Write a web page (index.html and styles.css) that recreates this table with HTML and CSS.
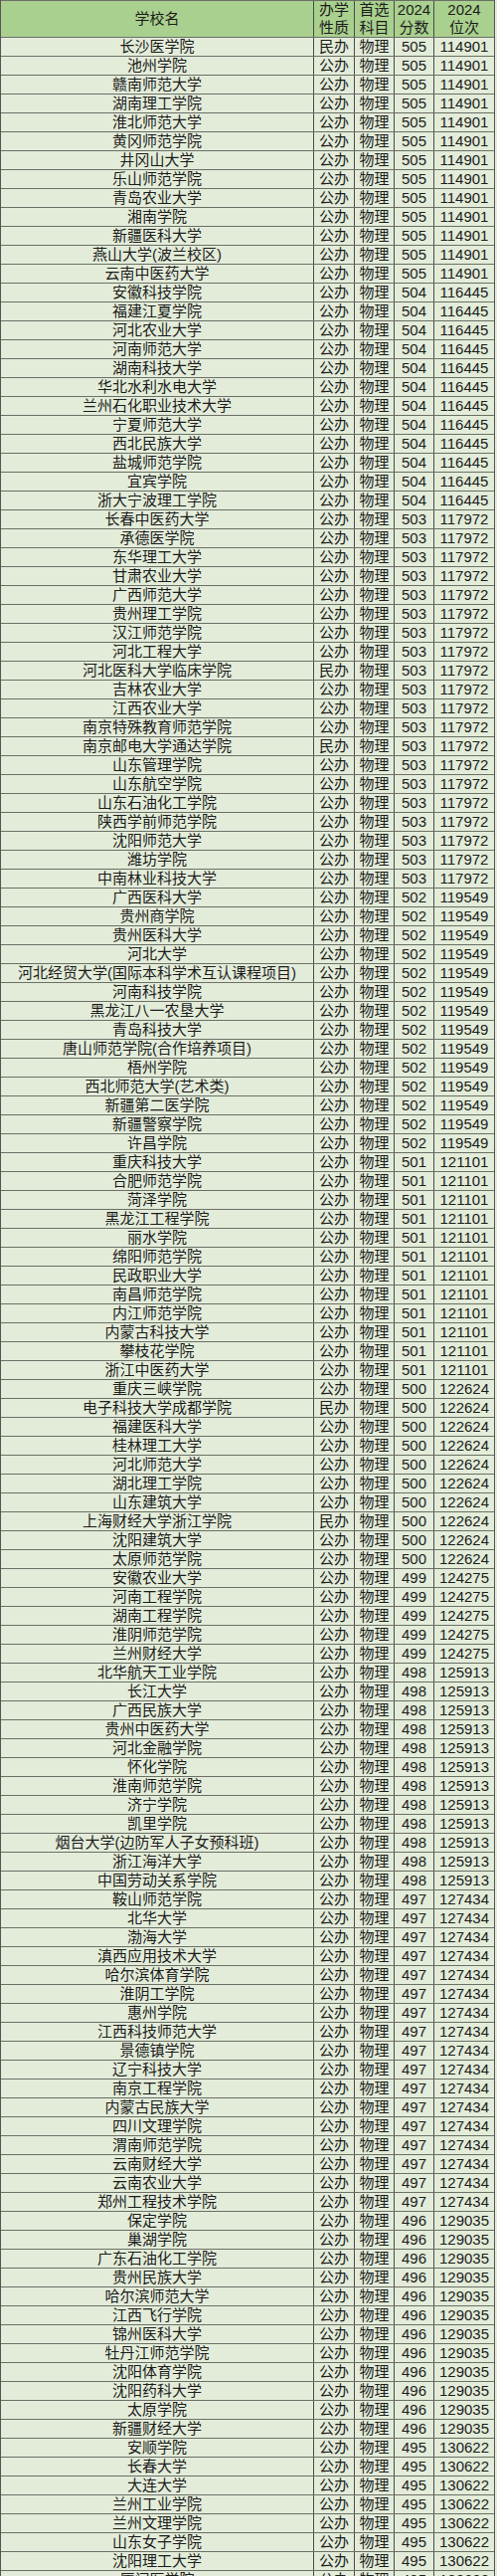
FILE: index.html
```html
<!DOCTYPE html>
<html lang="zh-CN">
<head>
<meta charset="utf-8">
<title>2024 物理类 分数位次</title>
<link rel="stylesheet" href="styles.css">
</head>
<body>
<div class="sheet">
<div class="row head"><span>学校名</span><span>办学<br>性质</span><span>首选<br>科目</span><span>2024<br>分数</span><span>2024<br>位次</span></div>
<div class="row"><span>长沙医学院</span><span>民办</span><span>物理</span><span>505</span><span>114901</span></div>
<div class="row"><span>池州学院</span><span>公办</span><span>物理</span><span>505</span><span>114901</span></div>
<div class="row"><span>赣南师范大学</span><span>公办</span><span>物理</span><span>505</span><span>114901</span></div>
<div class="row"><span>湖南理工学院</span><span>公办</span><span>物理</span><span>505</span><span>114901</span></div>
<div class="row"><span>淮北师范大学</span><span>公办</span><span>物理</span><span>505</span><span>114901</span></div>
<div class="row"><span>黄冈师范学院</span><span>公办</span><span>物理</span><span>505</span><span>114901</span></div>
<div class="row"><span>井冈山大学</span><span>公办</span><span>物理</span><span>505</span><span>114901</span></div>
<div class="row"><span>乐山师范学院</span><span>公办</span><span>物理</span><span>505</span><span>114901</span></div>
<div class="row"><span>青岛农业大学</span><span>公办</span><span>物理</span><span>505</span><span>114901</span></div>
<div class="row"><span>湘南学院</span><span>公办</span><span>物理</span><span>505</span><span>114901</span></div>
<div class="row"><span>新疆医科大学</span><span>公办</span><span>物理</span><span>505</span><span>114901</span></div>
<div class="row"><span>燕山大学(波兰校区)</span><span>公办</span><span>物理</span><span>505</span><span>114901</span></div>
<div class="row"><span>云南中医药大学</span><span>公办</span><span>物理</span><span>505</span><span>114901</span></div>
<div class="row"><span>安徽科技学院</span><span>公办</span><span>物理</span><span>504</span><span>116445</span></div>
<div class="row"><span>福建江夏学院</span><span>公办</span><span>物理</span><span>504</span><span>116445</span></div>
<div class="row"><span>河北农业大学</span><span>公办</span><span>物理</span><span>504</span><span>116445</span></div>
<div class="row"><span>河南师范大学</span><span>公办</span><span>物理</span><span>504</span><span>116445</span></div>
<div class="row"><span>湖南科技大学</span><span>公办</span><span>物理</span><span>504</span><span>116445</span></div>
<div class="row"><span>华北水利水电大学</span><span>公办</span><span>物理</span><span>504</span><span>116445</span></div>
<div class="row"><span>兰州石化职业技术大学</span><span>公办</span><span>物理</span><span>504</span><span>116445</span></div>
<div class="row"><span>宁夏师范大学</span><span>公办</span><span>物理</span><span>504</span><span>116445</span></div>
<div class="row"><span>西北民族大学</span><span>公办</span><span>物理</span><span>504</span><span>116445</span></div>
<div class="row"><span>盐城师范学院</span><span>公办</span><span>物理</span><span>504</span><span>116445</span></div>
<div class="row"><span>宜宾学院</span><span>公办</span><span>物理</span><span>504</span><span>116445</span></div>
<div class="row"><span>浙大宁波理工学院</span><span>公办</span><span>物理</span><span>504</span><span>116445</span></div>
<div class="row"><span>长春中医药大学</span><span>公办</span><span>物理</span><span>503</span><span>117972</span></div>
<div class="row"><span>承德医学院</span><span>公办</span><span>物理</span><span>503</span><span>117972</span></div>
<div class="row"><span>东华理工大学</span><span>公办</span><span>物理</span><span>503</span><span>117972</span></div>
<div class="row"><span>甘肃农业大学</span><span>公办</span><span>物理</span><span>503</span><span>117972</span></div>
<div class="row"><span>广西师范大学</span><span>公办</span><span>物理</span><span>503</span><span>117972</span></div>
<div class="row"><span>贵州理工学院</span><span>公办</span><span>物理</span><span>503</span><span>117972</span></div>
<div class="row"><span>汉江师范学院</span><span>公办</span><span>物理</span><span>503</span><span>117972</span></div>
<div class="row"><span>河北工程大学</span><span>公办</span><span>物理</span><span>503</span><span>117972</span></div>
<div class="row"><span>河北医科大学临床学院</span><span>民办</span><span>物理</span><span>503</span><span>117972</span></div>
<div class="row"><span>吉林农业大学</span><span>公办</span><span>物理</span><span>503</span><span>117972</span></div>
<div class="row"><span>江西农业大学</span><span>公办</span><span>物理</span><span>503</span><span>117972</span></div>
<div class="row"><span>南京特殊教育师范学院</span><span>公办</span><span>物理</span><span>503</span><span>117972</span></div>
<div class="row"><span>南京邮电大学通达学院</span><span>民办</span><span>物理</span><span>503</span><span>117972</span></div>
<div class="row"><span>山东管理学院</span><span>公办</span><span>物理</span><span>503</span><span>117972</span></div>
<div class="row"><span>山东航空学院</span><span>公办</span><span>物理</span><span>503</span><span>117972</span></div>
<div class="row"><span>山东石油化工学院</span><span>公办</span><span>物理</span><span>503</span><span>117972</span></div>
<div class="row"><span>陕西学前师范学院</span><span>公办</span><span>物理</span><span>503</span><span>117972</span></div>
<div class="row"><span>沈阳师范大学</span><span>公办</span><span>物理</span><span>503</span><span>117972</span></div>
<div class="row"><span>潍坊学院</span><span>公办</span><span>物理</span><span>503</span><span>117972</span></div>
<div class="row"><span>中南林业科技大学</span><span>公办</span><span>物理</span><span>503</span><span>117972</span></div>
<div class="row"><span>广西医科大学</span><span>公办</span><span>物理</span><span>502</span><span>119549</span></div>
<div class="row"><span>贵州商学院</span><span>公办</span><span>物理</span><span>502</span><span>119549</span></div>
<div class="row"><span>贵州医科大学</span><span>公办</span><span>物理</span><span>502</span><span>119549</span></div>
<div class="row"><span>河北大学</span><span>公办</span><span>物理</span><span>502</span><span>119549</span></div>
<div class="row"><span>河北经贸大学(国际本科学术互认课程项目)</span><span>公办</span><span>物理</span><span>502</span><span>119549</span></div>
<div class="row"><span>河南科技学院</span><span>公办</span><span>物理</span><span>502</span><span>119549</span></div>
<div class="row"><span>黑龙江八一农垦大学</span><span>公办</span><span>物理</span><span>502</span><span>119549</span></div>
<div class="row"><span>青岛科技大学</span><span>公办</span><span>物理</span><span>502</span><span>119549</span></div>
<div class="row"><span>唐山师范学院(合作培养项目)</span><span>公办</span><span>物理</span><span>502</span><span>119549</span></div>
<div class="row"><span>梧州学院</span><span>公办</span><span>物理</span><span>502</span><span>119549</span></div>
<div class="row"><span>西北师范大学(艺术类)</span><span>公办</span><span>物理</span><span>502</span><span>119549</span></div>
<div class="row"><span>新疆第二医学院</span><span>公办</span><span>物理</span><span>502</span><span>119549</span></div>
<div class="row"><span>新疆警察学院</span><span>公办</span><span>物理</span><span>502</span><span>119549</span></div>
<div class="row"><span>许昌学院</span><span>公办</span><span>物理</span><span>502</span><span>119549</span></div>
<div class="row"><span>重庆科技大学</span><span>公办</span><span>物理</span><span>501</span><span>121101</span></div>
<div class="row"><span>合肥师范学院</span><span>公办</span><span>物理</span><span>501</span><span>121101</span></div>
<div class="row"><span>菏泽学院</span><span>公办</span><span>物理</span><span>501</span><span>121101</span></div>
<div class="row"><span>黑龙江工程学院</span><span>公办</span><span>物理</span><span>501</span><span>121101</span></div>
<div class="row"><span>丽水学院</span><span>公办</span><span>物理</span><span>501</span><span>121101</span></div>
<div class="row"><span>绵阳师范学院</span><span>公办</span><span>物理</span><span>501</span><span>121101</span></div>
<div class="row"><span>民政职业大学</span><span>公办</span><span>物理</span><span>501</span><span>121101</span></div>
<div class="row"><span>南昌师范学院</span><span>公办</span><span>物理</span><span>501</span><span>121101</span></div>
<div class="row"><span>内江师范学院</span><span>公办</span><span>物理</span><span>501</span><span>121101</span></div>
<div class="row"><span>内蒙古科技大学</span><span>公办</span><span>物理</span><span>501</span><span>121101</span></div>
<div class="row"><span>攀枝花学院</span><span>公办</span><span>物理</span><span>501</span><span>121101</span></div>
<div class="row"><span>浙江中医药大学</span><span>公办</span><span>物理</span><span>501</span><span>121101</span></div>
<div class="row"><span>重庆三峡学院</span><span>公办</span><span>物理</span><span>500</span><span>122624</span></div>
<div class="row"><span>电子科技大学成都学院</span><span>民办</span><span>物理</span><span>500</span><span>122624</span></div>
<div class="row"><span>福建医科大学</span><span>公办</span><span>物理</span><span>500</span><span>122624</span></div>
<div class="row"><span>桂林理工大学</span><span>公办</span><span>物理</span><span>500</span><span>122624</span></div>
<div class="row"><span>河北师范大学</span><span>公办</span><span>物理</span><span>500</span><span>122624</span></div>
<div class="row"><span>湖北理工学院</span><span>公办</span><span>物理</span><span>500</span><span>122624</span></div>
<div class="row"><span>山东建筑大学</span><span>公办</span><span>物理</span><span>500</span><span>122624</span></div>
<div class="row"><span>上海财经大学浙江学院</span><span>民办</span><span>物理</span><span>500</span><span>122624</span></div>
<div class="row"><span>沈阳建筑大学</span><span>公办</span><span>物理</span><span>500</span><span>122624</span></div>
<div class="row"><span>太原师范学院</span><span>公办</span><span>物理</span><span>500</span><span>122624</span></div>
<div class="row"><span>安徽农业大学</span><span>公办</span><span>物理</span><span>499</span><span>124275</span></div>
<div class="row"><span>河南工程学院</span><span>公办</span><span>物理</span><span>499</span><span>124275</span></div>
<div class="row"><span>湖南工程学院</span><span>公办</span><span>物理</span><span>499</span><span>124275</span></div>
<div class="row"><span>淮阴师范学院</span><span>公办</span><span>物理</span><span>499</span><span>124275</span></div>
<div class="row"><span>兰州财经大学</span><span>公办</span><span>物理</span><span>499</span><span>124275</span></div>
<div class="row"><span>北华航天工业学院</span><span>公办</span><span>物理</span><span>498</span><span>125913</span></div>
<div class="row"><span>长江大学</span><span>公办</span><span>物理</span><span>498</span><span>125913</span></div>
<div class="row"><span>广西民族大学</span><span>公办</span><span>物理</span><span>498</span><span>125913</span></div>
<div class="row"><span>贵州中医药大学</span><span>公办</span><span>物理</span><span>498</span><span>125913</span></div>
<div class="row"><span>河北金融学院</span><span>公办</span><span>物理</span><span>498</span><span>125913</span></div>
<div class="row"><span>怀化学院</span><span>公办</span><span>物理</span><span>498</span><span>125913</span></div>
<div class="row"><span>淮南师范学院</span><span>公办</span><span>物理</span><span>498</span><span>125913</span></div>
<div class="row"><span>济宁学院</span><span>公办</span><span>物理</span><span>498</span><span>125913</span></div>
<div class="row"><span>凯里学院</span><span>公办</span><span>物理</span><span>498</span><span>125913</span></div>
<div class="row"><span>烟台大学(边防军人子女预科班)</span><span>公办</span><span>物理</span><span>498</span><span>125913</span></div>
<div class="row"><span>浙江海洋大学</span><span>公办</span><span>物理</span><span>498</span><span>125913</span></div>
<div class="row"><span>中国劳动关系学院</span><span>公办</span><span>物理</span><span>498</span><span>125913</span></div>
<div class="row"><span>鞍山师范学院</span><span>公办</span><span>物理</span><span>497</span><span>127434</span></div>
<div class="row"><span>北华大学</span><span>公办</span><span>物理</span><span>497</span><span>127434</span></div>
<div class="row"><span>渤海大学</span><span>公办</span><span>物理</span><span>497</span><span>127434</span></div>
<div class="row"><span>滇西应用技术大学</span><span>公办</span><span>物理</span><span>497</span><span>127434</span></div>
<div class="row"><span>哈尔滨体育学院</span><span>公办</span><span>物理</span><span>497</span><span>127434</span></div>
<div class="row"><span>淮阴工学院</span><span>公办</span><span>物理</span><span>497</span><span>127434</span></div>
<div class="row"><span>惠州学院</span><span>公办</span><span>物理</span><span>497</span><span>127434</span></div>
<div class="row"><span>江西科技师范大学</span><span>公办</span><span>物理</span><span>497</span><span>127434</span></div>
<div class="row"><span>景德镇学院</span><span>公办</span><span>物理</span><span>497</span><span>127434</span></div>
<div class="row"><span>辽宁科技大学</span><span>公办</span><span>物理</span><span>497</span><span>127434</span></div>
<div class="row"><span>南京工程学院</span><span>公办</span><span>物理</span><span>497</span><span>127434</span></div>
<div class="row"><span>内蒙古民族大学</span><span>公办</span><span>物理</span><span>497</span><span>127434</span></div>
<div class="row"><span>四川文理学院</span><span>公办</span><span>物理</span><span>497</span><span>127434</span></div>
<div class="row"><span>渭南师范学院</span><span>公办</span><span>物理</span><span>497</span><span>127434</span></div>
<div class="row"><span>云南财经大学</span><span>公办</span><span>物理</span><span>497</span><span>127434</span></div>
<div class="row"><span>云南农业大学</span><span>公办</span><span>物理</span><span>497</span><span>127434</span></div>
<div class="row"><span>郑州工程技术学院</span><span>公办</span><span>物理</span><span>497</span><span>127434</span></div>
<div class="row"><span>保定学院</span><span>公办</span><span>物理</span><span>496</span><span>129035</span></div>
<div class="row"><span>巢湖学院</span><span>公办</span><span>物理</span><span>496</span><span>129035</span></div>
<div class="row"><span>广东石油化工学院</span><span>公办</span><span>物理</span><span>496</span><span>129035</span></div>
<div class="row"><span>贵州民族大学</span><span>公办</span><span>物理</span><span>496</span><span>129035</span></div>
<div class="row"><span>哈尔滨师范大学</span><span>公办</span><span>物理</span><span>496</span><span>129035</span></div>
<div class="row"><span>江西飞行学院</span><span>公办</span><span>物理</span><span>496</span><span>129035</span></div>
<div class="row"><span>锦州医科大学</span><span>公办</span><span>物理</span><span>496</span><span>129035</span></div>
<div class="row"><span>牡丹江师范学院</span><span>公办</span><span>物理</span><span>496</span><span>129035</span></div>
<div class="row"><span>沈阳体育学院</span><span>公办</span><span>物理</span><span>496</span><span>129035</span></div>
<div class="row"><span>沈阳药科大学</span><span>公办</span><span>物理</span><span>496</span><span>129035</span></div>
<div class="row"><span>太原学院</span><span>公办</span><span>物理</span><span>496</span><span>129035</span></div>
<div class="row"><span>新疆财经大学</span><span>公办</span><span>物理</span><span>496</span><span>129035</span></div>
<div class="row"><span>安顺学院</span><span>公办</span><span>物理</span><span>495</span><span>130622</span></div>
<div class="row"><span>长春大学</span><span>公办</span><span>物理</span><span>495</span><span>130622</span></div>
<div class="row"><span>大连大学</span><span>公办</span><span>物理</span><span>495</span><span>130622</span></div>
<div class="row"><span>兰州工业学院</span><span>公办</span><span>物理</span><span>495</span><span>130622</span></div>
<div class="row"><span>兰州文理学院</span><span>公办</span><span>物理</span><span>495</span><span>130622</span></div>
<div class="row"><span>山东女子学院</span><span>公办</span><span>物理</span><span>495</span><span>130622</span></div>
<div class="row"><span>沈阳理工大学</span><span>公办</span><span>物理</span><span>495</span><span>130622</span></div>
<div class="row"><span>厦门医学院</span><span>公办</span><span>物理</span><span>495</span><span>130622</span></div>
</div>
</body>
</html>
```
FILE: styles.css
```css
html, body {
  margin: 0;
  padding: 0;
  background: #e3ecd9;
}
body {
  width: 500px;
  height: 2589px;
  overflow: hidden;
  font-family: "Liberation Sans", "Noto Sans CJK SC", sans-serif;
  font-size: 15px;
  color: #1c1c1c;
}
.sheet {
  width: 498px;
  border-left: 1px solid #555;
  border-right: 1px solid #555;
  box-sizing: border-box;
  background: #e3ecd9;
}
.row {
  display: grid;
  grid-template-columns: 315px 41px 40px 40px 60px;
  height: 19px;
  box-sizing: border-box;
  border-bottom: 1px solid #6b6f66;
}
.row > span {
  display: flex;
  align-items: center;
  justify-content: center;
  white-space: nowrap;
  line-height: 18px;
  border-right: 1px solid #4a4a4a;
  overflow: hidden;
}
.row > span:last-child {
  border-right: none;
}
.head {
  height: 38px;
  background: #a9d08e;
  border-top: 1px solid #6b6f66;
}
.head > span {
  line-height: 18px;
  text-align: center;
}
```
